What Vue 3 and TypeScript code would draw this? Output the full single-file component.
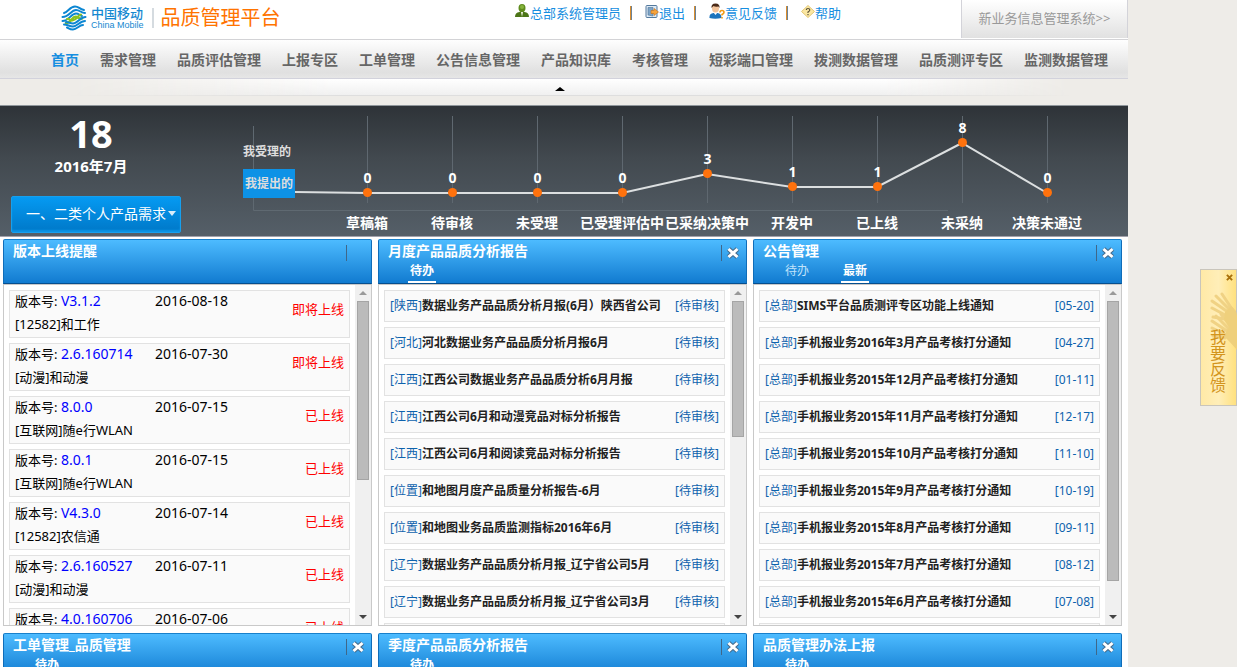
<script setup lang="ts">
import { ref } from 'vue'

interface VersionItem { version: string; date: string; name: string; status: string }
interface ListItem { tag: string; title: string; meta: string }
interface Panel {
  title: string
  tabs: string[]
  active: number
  closable: boolean
  thumb: number
  versions?: VersionItem[]
  rows?: ListItem[]
}

const navItems = ['首页', '需求管理', '品质评估管理', '上报专区', '工单管理', '公告信息管理', '产品知识库', '考核管理', '短彩端口管理', '拨测数据管理', '品质测评专区', '监测数据管理']
const activeNav = ref(0)

const points = [
  { label: '草稿箱', value: 0, y: 86 },
  { label: '待审核', value: 0, y: 86 },
  { label: '未受理', value: 0, y: 86 },
  { label: '已受理评估中', value: 0, y: 86 },
  { label: '已采纳决策中', value: 3, y: 67 },
  { label: '开发中', value: 1, y: 80 },
  { label: '已上线', value: 1, y: 80 },
  { label: '未采纳', value: 8, y: 36 },
  { label: '决策未通过', value: 0, y: 86 },
].map((p, i) => ({ ...p, x: 167 + i * 85 }))
const linePath = '95,86 ' + points.map((p) => `${p.x},${p.y + 1}`).join(' ')

const report = (tag: string, title: string): ListItem => ({ tag, title, meta: '[待审核]' })
const notice = (title: string, date: string): ListItem => ({ tag: '[总部]', title, meta: `[${date}]` })

const panels: Panel[] = [
  {
    title: '版本上线提醒', tabs: [], active: 0, closable: false, thumb: 58,
    versions: [
      { version: 'V3.1.2', date: '2016-08-18', name: '[12582]和工作', status: '即将上线' },
      { version: '2.6.160714', date: '2016-07-30', name: '[动漫]和动漫', status: '即将上线' },
      { version: '8.0.0', date: '2016-07-15', name: '[互联网]随e行WLAN', status: '已上线' },
      { version: '8.0.1', date: '2016-07-15', name: '[互联网]随e行WLAN', status: '已上线' },
      { version: 'V4.3.0', date: '2016-07-14', name: '[12582]农信通', status: '已上线' },
      { version: '2.6.160527', date: '2016-07-11', name: '[动漫]和动漫', status: '已上线' },
      { version: '4.0.160706', date: '2016-07-06', name: '[动漫]和动漫', status: '已上线' },
    ],
  },
  {
    title: '月度产品品质分析报告', tabs: ['待办'], active: 0, closable: true, thumb: 44,
    rows: [
      report('[陕西]', '数据业务产品品质分析月报(6月）陕西省公司'),
      report('[河北]', '河北数据业务产品品质分析月报6月'),
      report('[江西]', '江西公司数据业务产品品质分析6月月报'),
      report('[江西]', '江西公司6月和动漫竞品对标分析报告'),
      report('[江西]', '江西公司6月和阅读竞品对标分析报告'),
      report('[位置]', '和地图月度产品质量分析报告-6月'),
      report('[位置]', '和地图业务品质监测指标2016年6月'),
      report('[辽宁]', '数据业务产品品质分析月报_辽宁省公司5月'),
      report('[辽宁]', '数据业务产品品质分析月报_辽宁省公司3月'),
      report('[辽宁]', '数据业务产品品质分析月报_辽宁省公司2月'),
    ],
  },
  {
    title: '公告管理', tabs: ['待办', '最新'], active: 1, closable: true, thumb: 91,
    rows: [
      notice('SIMS平台品质测评专区功能上线通知', '05-20'),
      notice('手机报业务2016年3月产品考核打分通知', '04-27'),
      notice('手机报业务2015年12月产品考核打分通知', '01-11'),
      notice('手机报业务2015年11月产品考核打分通知', '12-17'),
      notice('手机报业务2015年10月产品考核打分通知', '11-10'),
      notice('手机报业务2015年9月产品考核打分通知', '10-19'),
      notice('手机报业务2015年8月产品考核打分通知', '09-11'),
      notice('手机报业务2015年7月产品考核打分通知', '08-12'),
      notice('手机报业务2015年6月产品考核打分通知', '07-08'),
      notice('手机报业务2015年5月产品考核打分通知', '06-10'),
    ],
  },
  { title: '工单管理_品质管理', tabs: ['待办'], active: 0, closable: true, thumb: 50 },
  { title: '季度产品品质分析报告', tabs: ['待办'], active: 0, closable: true, thumb: 50 },
  { title: '品质管理办法上报', tabs: ['待办'], active: 0, closable: true, thumb: 50 },
]
</script>

<template>
  <div class="page">
    <main class="main">
      <header class="top">
        <div class="brand">
          <svg class="logo" viewBox="0 0 26 26" aria-hidden="true">
            <g fill="none" stroke-width="2" stroke-linecap="round">
              <path stroke="#0b86d2" d="M3 8 C7 7 9 1.500 14 1.500 C18 1.500 18 4 23 5" />
              <path stroke="#0b86d2" d="M1.500 12 C8 12 10 5 15 5 C19 5 20 8 24 8" />
              <path stroke="#0b86d2" d="M1.500 16 C8 16 10 8.500 15 8.500 C18 8.500 18.500 10.500 21 11" />
              <path stroke="#8cc220" stroke-width="2.600" d="M5 18 C10 18 11 11.800 14.500 11.800 C18 11.800 17 14.200 21 13.500" />
              <path stroke="#8cc220" stroke-width="2" d="M6 14 C9 13 8 15.300 11.500 15.500 C16 15 17 9.800 20 9.500" />
              <path stroke="#0b86d2" d="M24.500 12 C19 12 17 18.500 12 18.500 C9 18.500 8 17 5 17" />
              <path stroke="#0b86d2" d="M24 16 C19 16 16 21.500 12 21.500 C8 21.500 7 19.500 3 19.500" />
              <path stroke="#0b86d2" d="M22 20 C18 20 16 24.500 12 24.500 C9 24.500 8 23.500 6 22.500" />
            </g>
          </svg>
          <div class="brand-name">
            <span class="brand-cn">中国移动</span>
            <span class="brand-en">China Mobile</span>
          </div>
          <h1 class="system-name">品质管理平台</h1>
        </div>
        <div class="user-links">
          <a href="#">
            <svg class="icon16" viewBox="0 0 16 16" aria-hidden="true">
              <path d="M1 14 Q1 9.500 5.500 9 L7 8 H9 L10.500 9 Q15 9.500 15 14 Z" fill="#4c7517" />
              <path d="M7 9 L8 14 L9 9 Z" fill="#f4f8e8" />
              <ellipse cx="8" cy="5" rx="3.500" ry="4" fill="#5f8c1d" />
              <ellipse cx="8" cy="4" rx="2" ry="2" fill="#86b43c" />
            </svg>总部系统管理员</a>
          <i class="bar"></i>
          <a href="#">
            <svg class="icon14" viewBox="0 0 14 14" aria-hidden="true">
              <rect x="1" y="0.500" width="11" height="12" rx="1" fill="#dce9f5" stroke="#54799d" />
              <path d="M3 2.500 H8 V11 L3 10 Z" fill="#7fa4c6" stroke="#4f7599" stroke-width=".6" />
              <path d="M6 5.500 H9 V3.500 L13.500 7 L9 10.500 V8.500 H6 Z" fill="#f7a33b" stroke="#c66d12" stroke-width=".6" />
            </svg>退出</a>
          <i class="bar"></i>
          <a href="#">
            <svg class="icon16" viewBox="0 0 16 16" aria-hidden="true">
              <path d="M0.500 15 Q0 10.500 4.500 10 H8.500 Q12.500 10.500 12.500 15 Q6 16.500 0.500 15 Z" fill="#1c74bd" />
              <path d="M4.500 9.500 L6.500 12 L8.500 9.500 Z" fill="#fff" />
              <ellipse cx="6.500" cy="5.500" rx="3.500" ry="4" fill="#f3c49b" />
              <path d="M2.500 5 Q2 0.500 6.500 0.500 Q11 0.500 10.500 5 L9.500 3.500 Q6 4 4.500 3 Z" fill="#4b2a18" />
              <path d="M11 9.500 Q11 7.500 13 7.500 Q15 7.500 15 9.200 Q15 10.500 13 11.500 V12.500 M13 14 V15.500" fill="none" stroke="#f39a13" stroke-width="1.600" />
            </svg>意见反馈</a>
          <i class="bar"></i>
          <a href="#">
            <svg class="icon14" viewBox="0 0 14 14" aria-hidden="true">
              <path d="M7 0.500 L13.500 6.500 L7 12.500 L0.500 6.500 Z" fill="#fbe7a3" stroke="#e4c877" />
              <path d="M5.300 5 Q5.300 3.500 7 3.500 Q8.800 3.500 8.800 5 Q8.800 6 7 7 V8 M7 9 V10.200" fill="none" stroke="#5c5338" stroke-width="1.200" />
            </svg>帮助</a>
        </div>
        <a class="other-system" href="#">新业务信息管理系统&gt;&gt;</a>
      </header>

      <nav class="nav">
        <a v-for="(item, i) in navItems" :key="item" href="#" :class="{ on: i === activeNav }" @click.prevent="activeNav = i">{{ item }}</a>
      </nav>
      <div class="substrip"><div class="glow"><button class="fold" aria-label="收起"></button></div></div>

      <section class="overview">
        <div class="today">
          <strong class="day">18</strong>
          <span class="month">2016年7月</span>
          <button class="category">一、二类个人产品需求<i class="caret"></i></button>
        </div>
        <div class="plot">
          <svg class="chart" viewBox="0 0 928 130">
            <g stroke="#6a737b">
              <path d="M53.500 20 V104.500 H748" fill="none" stroke="#5f6971" />
              <path v-for="p in points" :key="p.label" :d="`M${p.x + 0.5} 10 V97`" stroke="#5f6870" />
            </g>
            <polyline :points="linePath" fill="none" stroke="#dcdfe0" stroke-width="2" />
            <g v-for="p in points" :key="p.label">
              <circle :cx="p.x + 0.5" :cy="p.y + 0.5" r="4.500" fill="#ff720d" />
              <text :x="p.x + 0.5" :y="p.y - 9">{{ p.value }}</text>
              <text :x="p.x" y="122">{{ p.label }}</text>
            </g>
          </svg>
          <div class="modes">
            <button>我受理的</button>
            <button class="on">我提出的</button>
          </div>
        </div>
      </section>

      <div class="panels">
        <section v-for="panel in panels" :key="panel.title" class="panel">
          <header class="panel-head">
            <div class="panel-titles">
              <h2>{{ panel.title }}</h2>
              <div class="tabs">
                <button v-for="(tab, i) in panel.tabs" :key="tab" :class="{ on: i === panel.active }" @click="panel.active = i">{{ tab }}</button>
              </div>
            </div>
            <div class="panel-tools">
              <button v-if="panel.closable" aria-label="关闭">
                <svg viewBox="0 0 14 14">
                  <path d="M2.500 3 L11.500 11 M11.500 3 L2.500 11" stroke="#456b8c" stroke-width="5" />
                  <path d="M2.500 3 L11.500 11 M11.500 3 L2.500 11" stroke="#fff" stroke-width="3" />
                </svg>
              </button>
            </div>
          </header>
          <div class="panel-body">
            <ul v-if="panel.versions" class="list">
              <li v-for="(v, i) in panel.versions" :key="i" class="version">
                <div class="version-info">
                  <div class="version-line"><span class="version-no">版本号: <a href="#">{{ v.version }}</a></span><time>{{ v.date }}</time></div>
                  <div class="version-name">{{ v.name }}</div>
                </div>
                <span class="status">{{ v.status }}</span>
              </li>
            </ul>
            <ul v-else class="list">
              <li v-for="(r, i) in panel.rows" :key="i" class="row">
                <a href="#"><span class="tag">{{ r.tag }}</span>{{ r.title }}</a>
                <span class="tag">{{ r.meta }}</span>
              </li>
            </ul>
            <div class="scroll" aria-hidden="true">
              <i class="up"></i>
              <div class="track"><div class="thumb" :style="{ height: panel.thumb + '%' }"></div></div>
              <i class="down"></i>
            </div>
          </div>
        </section>
      </div>
    </main>

    <aside class="side">
      <div class="feedback">
        <svg class="hands" viewBox="0 0 36 62" aria-hidden="true">
          <g fill="none" stroke="#f0d284" stroke-width="3" stroke-linecap="round">
            <path d="M26 24 L11 16 M27 20 L11 9 M29 18 L15 4 M31 17 L21 2 M24 27 L12 25" />
            <path d="M26 43 L11 36 M26 39 L11 29 M28 37 L15 24 M30 35 L20 22 M24 46 L12 44" />
          </g>
          <path d="M24 20 L30 14 Q36 18 36 24 V58 Q29 50 23 44 L28 35 L23 27 Z" fill="#efd07c" />
        </svg>
        <button class="feedback-close" aria-label="关闭反馈">
          <svg viewBox="0 0 8 8"><path d="M1 1 L7 7 M7 1 L1 7" stroke="#a9700a" stroke-width="2.200" /></svg>
        </button>
        <a href="#" class="feedback-text">我要反馈</a>
      </div>
    </aside>
  </div>
</template>

<style>
body { margin: 0; background: #eeece8; }
</style>

<style scoped>
* { box-sizing: border-box; }
.page {
  display: flex;
  height: 100vh;
  overflow: hidden;
  background: #eeece8;
  color: #000;
  font: 13px/24px "Noto Sans", "Noto Sans CJK SC", sans-serif;
  white-space: nowrap;
}
a { color: inherit; text-decoration: none; }
button { padding: 0; border: 0; background: none; color: inherit; font: inherit; cursor: pointer; }
h1, h2, ul { margin: 0; padding: 0; list-style: none; }
.main { flex: 1; min-width: 0; background: #fff; }

.top { display: flex; height: 40px; border-bottom: 1px solid #d3d3d6; }
.brand { display: flex; align-items: center; height: 36px; padding-left: 61px; }
.logo { width: 26px; height: 26px; margin-right: 4px; }
.brand-name { display: flex; flex-direction: column; color: #1588d0; }
.brand-cn { font-size: 13px; font-weight: 500; line-height: 14px; }
.brand-en { font: 9px/10px "Liberation Sans", sans-serif; }
.system-name { margin-left: 8px; padding-left: 7px; border-left: 2px solid #d5dbe0; color: #ff7300; font-size: 20px; font-weight: 400; line-height: 20px; }
.user-links { display: flex; align-items: center; height: 26px; margin: 0 120px 0 auto; color: #168ee0; }
.user-links a { display: flex; align-items: center; }
.icon16 { width: 16px; height: 16px; margin-bottom: 4px; }
.icon14 { width: 14px; height: 14px; margin-bottom: 3px; }
.bar { width: 2px; height: 14px; margin: 0 13px 0 9px; background: linear-gradient(90deg, #d98d2e 50%, #6c8296 50%); }
.other-system { width: 167px; height: 38px; border: solid #d3d3d9; border-width: 0 1px; background: linear-gradient(#fff, #e1e1e1); color: #999; line-height: 37px; text-align: center; }

.nav { display: flex; gap: 21px; height: 39px; padding-left: 51px; border-bottom: 1px solid #d2d2dc; background: linear-gradient(#fefefe, #e0e0e0 85%, #e6e6e6); color: #666; font-size: 14px; font-weight: 700; line-height: 39px; }
.nav .on { color: #168ee0; }
.substrip { height: 27px; border-bottom: 1px solid #8f969b; background: #eeece8; }
.glow { display: flex; justify-content: center; height: 17px; padding-right: 8px; border-bottom: 1px solid #dedede; background: linear-gradient(#fff, #f0f0f0); mask-image: linear-gradient(90deg, transparent 6%, #000 30%, #000 78%, transparent 95%); }
.fold { width: 0; height: 0; margin-top: 8px; border: solid transparent; border-width: 0 5px 4px; border-bottom-color: #000; }

.overview { display: flex; height: 131px; border-bottom: 1px solid #a2a2ac; background: linear-gradient(#2e3338, #42494f 40%, #555f68); color: #fff; }
.today { display: flex; flex-direction: column; width: 200px; padding-left: 11px; }
.day { width: 160px; margin-top: 5px; font-size: 38px; line-height: 44px; text-align: center; }
.month { width: 160px; font-size: 15px; font-weight: 700; line-height: 22px; text-align: center; }
.category { display: flex; align-items: center; justify-content: flex-end; gap: 2px; width: 170px; height: 37px; margin-top: 19px; padding: 0 4px 2px 0; border: 1px solid #16a0ee; border-radius: 2px; background: linear-gradient(#059af2, #0078c8); box-shadow: inset 0 -2px 2px #0a94e6; font-size: 14px; }
.caret { border: solid transparent; border-width: 5px 4px 0; border-top-color: #d9edfa; }
.plot { display: grid; flex: 1; min-width: 0; }
.chart, .modes { grid-area: 1 / 1; }
.chart { width: 100%; height: 130px; }
.chart text { fill: #fff; font-size: 14px; font-weight: 700; text-anchor: middle; }
.modes { display: flex; flex-direction: column; gap: 3px; justify-self: start; width: 52px; margin: 31px 0 0 43px; color: #ddd; font-size: 12px; font-weight: 700; }
.modes button { height: 29px; text-align: left; }
.modes .on { background: #0d92e6; text-align: center; }

.panels { display: grid; grid-template-columns: repeat(3, minmax(0, 1fr)); gap: 7px 6px; padding: 2px 6px 0 3px; }
.panel-head { display: flex; justify-content: space-between; height: 45px; border: 1px solid #0f6db9; border-top-color: #1880cb; border-bottom-color: #064f8f; border-radius: 2px 2px 0 0; background: linear-gradient(#4dbbff, #117bd0); color: #fff; }
.panel-titles { padding-left: 9px; }
.panel h2 { font-size: 14px; font-weight: 700; line-height: 21px; }
.tabs { display: flex; gap: 30px; padding-left: 20px; }
.tabs button { width: 28px; height: 22px; border-bottom: 2px solid transparent; color: #c1e3fb; font-size: 12px; line-height: 20px; }
.tabs .on { border-color: #fff; color: #fff; font-weight: 700; }
.panel-tools { width: 25px; height: 16px; margin-top: 5px; border-left: 1px solid #3f6789; }
.panel-tools button { display: block; width: 14px; height: 14px; margin: 1px 0 0 4px; }
.panel-tools svg, .feedback-close svg { display: block; width: 100%; }
.panel-body { display: flex; height: 342px; border: 1px solid #c9c9c9; overflow: hidden; }
.list { display: flex; flex: 1; flex-direction: column; gap: 5px; min-width: 0; padding: 5px; }
.version, .row { display: flex; flex: none; justify-content: space-between; padding: 0 5px; border: 1px solid #e2e2e2; background: #fafafa; }
.version { height: 48px; }
.version-line { display: flex; line-height: 20px; }
.version-name { line-height: 26px; }
.version-no { width: 140px; }
.version-no a { color: #00f; }
.version-no a, time { font-size: 14px; }
.status { color: #f00; line-height: 37px; }
.row { height: 32px; color: #222; font-size: 12px; font-weight: 700; line-height: 30px; }
.tag { color: #0d62ad; font-weight: 400; }
.scroll { display: flex; flex-direction: column; align-items: center; width: 16px; background: #f0f0f0; }
.up, .down { margin: 6px 0; border: solid transparent; }
.up { border-width: 0 4px 4px; border-bottom-color: #999; }
.down { border-width: 4px 4px 0; border-top-color: #444; }
.track { flex: 1; }
.thumb { width: 12px; border: 1px solid #a5a5a5; background: #bbb; }

.side { width: 109px; padding-top: 269px; }
.feedback { display: grid; width: 37px; height: 137px; margin-left: auto; border: 1px solid #c9c5bb; background: linear-gradient(90deg, #ffe9a6, #ffeeb8 50%, #ffe17f); }
.feedback > * { grid-area: 1 / 1; }
.hands { width: 36px; height: 62px; margin-top: 22px; }
.feedback-close { align-self: start; justify-self: end; width: 7px; height: 7px; margin: 4px 4px 0 0; }
.feedback-text { width: 17px; margin: 59px 0 0 9px; color: #d3941c; font-size: 16px; line-height: 16px; white-space: normal; word-break: break-all; }
</style>
